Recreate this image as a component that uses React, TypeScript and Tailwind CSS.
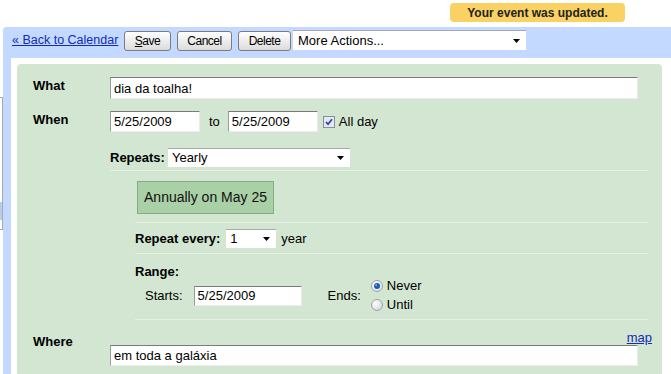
import React from "react";

const inputCls =
  "bg-white text-[13px] text-black px-[3px] outline-none border-t border-l border-r border-b border-t-[#7a7a7a] border-l-[#9c9c9c] border-r-[#ececec] border-b-[#ececec]";

const Arrow = () => (
  <svg width="7" height="4" viewBox="0 0 7 4">
    <path d="M0 0h7L3.5 4z" fill="#000" />
  </svg>
);

const FakeSelect = ({ value, className }: { value: string; className: string }) => (
  <div
    className={`bg-white flex items-center justify-between pl-[4px] pr-[6px] text-[13px] border-t border-t-[#a8a8a8] ${className}`}
  >
    <span>{value}</span>
    <Arrow />
  </div>
);

const Radio = ({ on }: { on?: boolean }) => (
  <svg width="12" height="12" viewBox="0 0 12 12">
    <defs>
      <radialGradient id={on ? "rOn" : "rOff"} cx="0.35" cy="0.35" r="0.8">
        <stop offset="0" stopColor="#ffffff" />
        <stop offset="1" stopColor={on ? "#d9dde2" : "#cfd2d6"} />
      </radialGradient>
    </defs>
    <circle cx="6" cy="6" r="5.5" fill={`url(#${on ? "rOn" : "rOff"})`} stroke="#9aa3ad" />
    {on && (
      <>
        <circle cx="6" cy="6" r="3" fill="#1d5da8" />
        <circle cx="5.2" cy="5.2" r="1" fill="#7fb2e8" />
      </>
    )}
  </svg>
);

const Check = () => (
  <svg width="12" height="12" viewBox="0 0 12 12">
    <rect x="0.5" y="0.5" width="11" height="11" fill="#e6e8f2" stroke="#8a8c9c" />
    <path d="M3 6l2 2.2L9 3.2" stroke="#3043ad" strokeWidth="1.8" fill="none" />
  </svg>
);

const Btn = ({ children, w }: { children: React.ReactNode; w: string }) => (
  <button
    className={`${w} h-[20px] rounded-[3px] border border-[#7c7c7c] bg-gradient-to-b from-white to-[#dcdcdc] text-[12px] tracking-[-0.5px] text-black flex items-center justify-center`}
  >
    {children}
  </button>
);

export default function App() {
  return (
    <div className="w-[671px] h-[374px] overflow-hidden bg-white font-['Liberation_Sans',Arial,sans-serif] text-black">
      <div className="h-[27px] flex">
        <div className="ml-[450px] mt-[3px] w-[175px] h-[19px] rounded-[4px] bg-[#fad163] flex items-center justify-center text-[12px] font-bold text-[#222]">
          Your event was updated.
        </div>
      </div>

      <div className="flex h-[400px]">
        <div className="w-[3px] shrink-0 pt-[70px]">
          <div className="h-[133px] border-y border-r border-[#a9a9a9] bg-white flex flex-col">
            <div className="h-[104px]" />
            <div className="h-[18px] bg-[#b9cde8]" />
          </div>
        </div>

        <div className="flex-1 bg-[#c3d9ff] rounded-tl-[4px] pl-[8px] flex flex-col">
          <div className="h-[31px] flex items-start pt-[4px]">
            <div className="w-[113px] pl-[1px] h-[20px] flex items-center -mt-[1px]">
              <a className="text-[12.5px] text-[#112abb] underline cursor-pointer">« Back to Calendar</a>
            </div>
            <div className="flex gap-[6px]">
              <Btn w="w-[47px]">
                <span>
                  <span className="underline">S</span>ave
                </span>
              </Btn>
              <Btn w="w-[55px]">Cancel</Btn>
              <Btn w="w-[53px]">Delete</Btn>
            </div>
            <FakeSelect value="More Actions..." className="ml-[2px] w-[233px] h-[20px] -mt-[1px] border-t-[#555] pl-[5px]" />
          </div>

          <div className="flex-1 bg-white pt-[6px] pl-[6px] pr-[9px]">
            <div className="h-full bg-[#d3e6d1] rounded-[4px] pl-[16px] pt-[13px]">
              <div className="flex">
                <div className="w-[77px] pt-[1px] text-[13px] leading-[15px] font-bold">What</div>
                <input readOnly defaultValue="dia da toalha!" className={`${inputCls} w-[528px] h-[22px]`} />
              </div>

              <div className="flex mt-[12px]">
                <div className="w-[77px] pt-[1px] text-[13px] leading-[15px] font-bold">When</div>
                <div className="flex items-center text-[13px]">
                  <input readOnly defaultValue="5/25/2009" className={`${inputCls} w-[90px] h-[21px]`} />
                  <span className="ml-[9px]">to</span>
                  <input readOnly defaultValue="5/25/2009" className={`${inputCls} ml-[8px] w-[90px] h-[21px]`} />
                  <span className="ml-[5px] flex">
                    <Check />
                  </span>
                  <span className="ml-[4px]">All day</span>
                </div>
              </div>

              <div className="ml-[77px]">
                <div className="flex items-center h-[19px] mt-[16px]">
                  <span className="text-[13px] font-bold">Repeats:</span>
                  <FakeSelect value="Yearly" className="ml-[3px] w-[182px] h-[19px]" />
                </div>
                <div className="mt-[3px] h-px w-[538px] bg-[#e6f1e4]" />

                <div className="mt-[10px] ml-[27px] w-[137px] h-[33px] bg-[#a9d0a6] border border-[#83ad80] flex items-center justify-center text-[14px] text-[#111]">
                  Annually on May 25
                </div>

                <div className="ml-[25px]">
                  <div className="mt-[8px] h-px w-[513px] bg-[#e6f1e4]" />
                  <div className="flex items-center h-[19px] mt-[6px] text-[13px]">
                    <span className="font-bold">Repeat every:</span>
                    <FakeSelect value="1" className="ml-[6px] w-[50px] h-[19px]" />
                    <span className="ml-[5px]">year</span>
                  </div>
                  <div className="mt-[5px] h-px w-[513px] bg-[#e6f1e4]" />
                  <div className="mt-[10px] text-[13px] leading-[15px] font-bold">Range:</div>
                  <div className="flex items-center h-[33px] text-[13px]">
                    <span className="ml-[10px]">Starts:</span>
                    <input readOnly defaultValue="5/25/2009" className={`${inputCls} ml-[11px] w-[108px] h-[20px]`} />
                    <span className="ml-[26px]">Ends:</span>
                    <div className="ml-[10px] flex flex-col gap-[7px]">
                      <div className="flex items-center h-[12px]">
                        <Radio on />
                        <span className="ml-[4px]">Never</span>
                      </div>
                      <div className="flex items-center h-[12px]">
                        <Radio />
                        <span className="ml-[4px]">Until</span>
                      </div>
                    </div>
                  </div>
                  <div className="mt-[7px] h-px w-[513px] bg-[#e6f1e4]" />
                </div>
              </div>

              <div className="flex mt-[10px]">
                <div className="w-[77px] pt-[4px] text-[13px] leading-[15px] font-bold">Where</div>
                <div className="w-[542px] flex flex-col">
                  <div className="text-right text-[13px] leading-[15px]">
                    <a className="text-[#112abb] underline cursor-pointer">map</a>
                  </div>
                  <input readOnly defaultValue="em toda a galáxia" className={`${inputCls} w-[528px] h-[21px]`} />
                </div>
              </div>
            </div>
          </div>
        </div>
      </div>
    </div>
  );
}
